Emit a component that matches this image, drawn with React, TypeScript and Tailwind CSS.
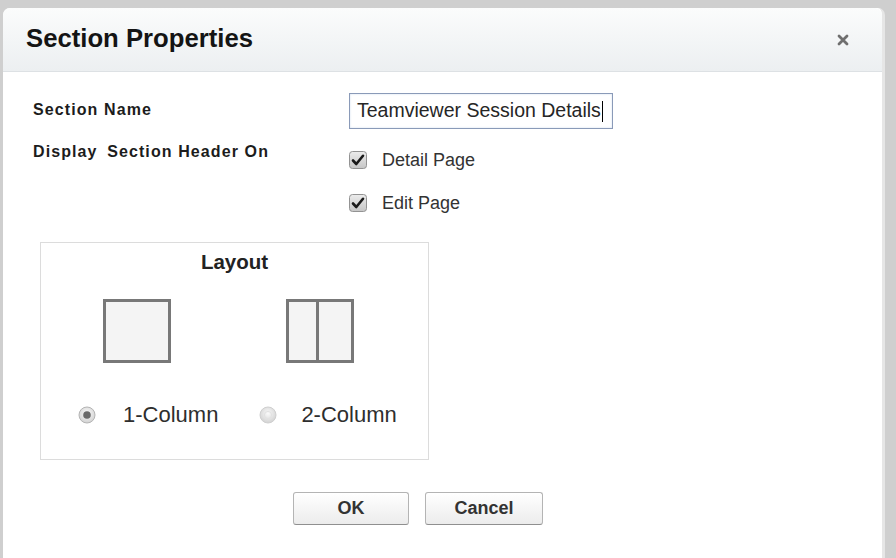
import React from "react";

function CheckBox() {
  return (
    <svg width="18" height="18" viewBox="0 0 18 18" className="shrink-0">
      <defs>
        <linearGradient id="cbg" x1="0" y1="0" x2="0" y2="1">
          <stop offset="0" stopColor="#ececec" />
          <stop offset="1" stopColor="#c6c6c6" />
        </linearGradient>
      </defs>
      <rect x="0.5" y="0.5" width="17" height="17" rx="3" fill="url(#cbg)" stroke="#939393" />
      <path d="M4 9.5 L7.3 13 L14 4.8" fill="none" stroke="#1a1a1a" strokeWidth="2.6" strokeLinecap="round" strokeLinejoin="round" />
    </svg>
  );
}

function Radio({ checked }: { checked: boolean }) {
  return (
    <svg width="18" height="18" viewBox="0 0 18 18" className="shrink-0">
      <defs>
        <radialGradient id={checked ? "rgOn" : "rgOff"} cx="0.5" cy="0.4" r="0.6">
          <stop offset="0" stopColor="#fafafa" />
          <stop offset="1" stopColor="#d2d2d2" />
        </radialGradient>
      </defs>
      <circle cx="9" cy="9" r="8" fill={`url(#${checked ? "rgOn" : "rgOff"})`} stroke={checked ? "#b4b4b4" : "#cfcfcf"} />
      {checked ? (
        <circle cx="9" cy="9" r="3.8" fill="#6a6a6a" />
      ) : (
        <circle cx="9" cy="9" r="3.6" fill="none" stroke="#e2e2e2" />
      )}
    </svg>
  );
}

export default function App() {
  return (
    <div className="w-[896px] h-[558px] bg-[#cfcfcf] overflow-hidden font-['Liberation_Sans',Arial,sans-serif]">
      <div className="mt-[8px] ml-[3px] w-[882px] h-[550px] bg-white rounded-t-[7px] border-r-[3px] border-[#e6e6e6] flex flex-col">
        {/* header */}
        <div className="h-[64px] shrink-0 flex items-center justify-between pl-[23px] pr-[28px] pb-[3px] rounded-t-[7px] bg-gradient-to-b from-[#fbfcfc] to-[#eceff1] border-b border-[#dde1e4]">
          <h1 className="text-[25.7px] font-bold text-[#141414] leading-[30px]">Section Properties</h1>
          <div className="w-[22px] h-[22px] flex items-center justify-center mt-[3px]">
            <svg width="12" height="12" viewBox="0 0 12 12">
              <path d="M2 2 L10 10 M10 2 L2 10" stroke="#6f6f6f" strokeWidth="2.8" strokeLinecap="round" />
            </svg>
          </div>
        </div>

        {/* body */}
        <div className="flex-1 px-[30px] pt-[21px] text-[#2b2b2b]">
          <div className="flex items-center">
            <div className="w-[316px] text-[16px] font-bold tracking-[1.1px] text-[#1c1c1c] pb-[3px]">Section Name</div>
            <div className="w-[264px] h-[36px] border border-[#8a9ab8] shadow-[inset_0_0_2px_#c9d8ec] flex items-center pl-[7px] text-[19.5px] text-[#262626]">
              Teamviewer Session Details
              <span className="inline-block w-[1px] h-[21px] bg-black ml-[1px]" />
            </div>
          </div>

          <div className="flex items-start mt-[13px]">
            <div className="w-[316px] text-[16px] font-bold tracking-[1.1px] text-[#1c1c1c] leading-[20px]">
              Display<span className="ml-[4px]"> Section Header On</span>
            </div>
            <div className="flex flex-col gap-[21px] pt-[7px]">
              <label className="flex items-center gap-[15px] h-[22px] text-[18px] text-[#333]">
                <CheckBox />
                Detail Page
              </label>
              <label className="flex items-center gap-[15px] h-[22px] text-[18px] text-[#333]">
                <CheckBox />
                Edit Page
              </label>
            </div>
          </div>

          {/* layout box */}
          <div className="ml-[7px] mt-[28px] w-[389px] h-[218px] border border-[#dcdcdc] flex flex-col">
            <div className="text-center text-[20.5px] font-bold text-[#222] leading-[24px] pt-[7px]">Layout</div>
            <div className="flex mt-[25px]">
              <div className="ml-[62px] w-[68px] h-[64px] border-[3px] border-[#787878] bg-[#f4f4f4]" />
              <div className="ml-[115px] w-[68px] h-[64px] border-[3px] border-[#787878] bg-[#f4f4f4] flex">
                <div className="w-[30px] border-r-[3px] border-[#787878]" />
              </div>
            </div>
            <div className="flex items-center mt-[39px] text-[22px] text-[#2e2e2e] leading-[26px]">
              <div className="ml-[37px]">
                <Radio checked />
              </div>
              <span className="ml-[27px]">1-Column</span>
              <div className="ml-[41px]">
                <Radio checked={false} />
              </div>
              <span className="ml-[24px]">2-Column</span>
            </div>
          </div>

          {/* buttons */}
          <div className="flex gap-[16px] mt-[32px] ml-[260px]">
            <button className="w-[116px] h-[33px] rounded-[3px] border border-[#b4b4b4] border-b-[#8f8f8f] bg-gradient-to-b from-white to-[#ececec] text-[18px] font-bold text-[#333]">
              OK
            </button>
            <button className="w-[118px] h-[33px] rounded-[3px] border border-[#b4b4b4] border-b-[#8f8f8f] bg-gradient-to-b from-white to-[#ececec] text-[18px] font-bold text-[#333]">
              Cancel
            </button>
          </div>
        </div>
      </div>
    </div>
  );
}
